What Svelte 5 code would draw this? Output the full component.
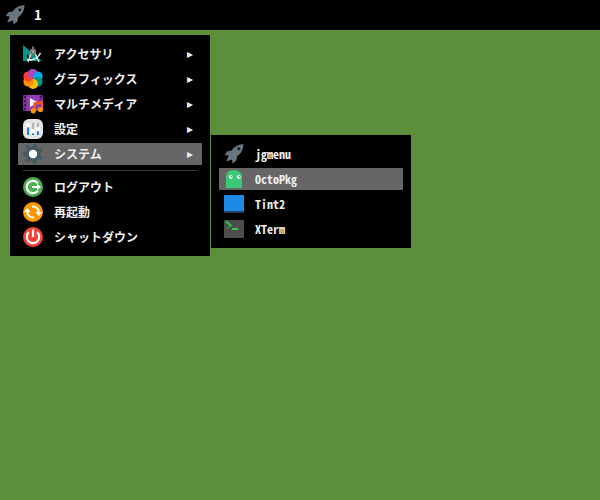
<script lang="ts">
  let active = $state('system');
  let activeApp = $state('octopkg');

  const categories = [
    { key: 'accessories', label: 'アクセサリ' },
    { key: 'graphics', label: 'グラフィックス' },
    { key: 'multimedia', label: 'マルチメディア' },
    { key: 'settings', label: '設定' },
    { key: 'system', label: 'システム' },
  ];

  const session = [
    { key: 'logout', label: 'ログアウト' },
    { key: 'reboot', label: '再起動' },
    { key: 'shutdown', label: 'シャットダウン' },
  ];

  const systemApps = [
    { key: 'jgmenu', label: 'jgmenu' },
    { key: 'octopkg', label: 'OctoPkg' },
    { key: 'tint2', label: 'Tint2' },
    { key: 'xterm', label: 'XTerm' },
  ];
</script>

{#snippet icon(name: string)}
  <svg class="icon" viewBox="0 0 20 20" aria-hidden="true">
    {#if name === 'accessories'}
      <path d="M0 1L19 17H0z" fill="#009688" />
      <path d="M4 10l5 5H4z" fill="#04110f" />
      <path d="M8.6 8L5 18M11.4 8l4.6 10" stroke="#cfd2d4" stroke-width="1.6" fill="none" />
      <path d="M4 15.5Q13 17.5 17.5 9" stroke="#f1f1f1" stroke-width="1.6" fill="none" />
      <path d="M9 2.5h2V6H9z" fill="#757575" />
      <circle cx="10" cy="7.6" r="3.2" fill="#757575" />
      <circle cx="10" cy="7.8" r="1" fill="#bdbdbd" />
    {:else if name === 'graphics'}
      <circle cx="10" cy="5" r="5" fill="#ab47bc" />
      <circle cx="14.6" cy="7.4" r="5" fill="#03a9f4" />
      <circle cx="14.6" cy="12.6" r="5" fill="#009688" />
      <circle cx="10" cy="15" r="5" fill="#ffc107" />
      <circle cx="5.4" cy="12.6" r="5" fill="#ff8f00" />
      <circle cx="5.4" cy="7.4" r="5" fill="#ff3d2e" />
      <path d="M10 10A5 5 0 0 1 5.8 2.3 5 5 0 0 1 10 0L13 4Q9 6 10 10z" fill="#ab47bc" />
    {:else if name === 'multimedia'}
      <rect y="1" width="20" height="16" rx="1" fill="#7b3196" />
      <path d="M4 1h12v16H4z" fill="#8e3eaf" />
      <path
        d="M1 2h2v2H1zM1 6h2v2H1zM1 10h2v2H1zM1 14h2v2H1zM17 2h2v2h-2z"
        fill="#40185a"
      />
      <path d="M7 4l8 4.5L7 13z" fill="#fff" />
      <path d="M11.5 17V9.2l7.5-1v8" stroke="#ff5722" stroke-width="2" fill="none" />
      <path d="M11 10.2l9-1.5" stroke="#f4511e" stroke-width="2" />
      <circle cx="10.3" cy="16.8" r="2.6" fill="#ff9800" />
      <circle cx="17.5" cy="15.6" r="2.6" fill="#ff9800" />
    {:else if name === 'settings'}
      <rect width="20" height="20" rx="6" fill="#e3e4e5" />
      <path d="M5 4v12M10 4v12M15 4v12" stroke="#b0b3b6" stroke-width="2" />
      <path d="M5 7v9M10 12v4M15 11v5" stroke="#1e7fe0" stroke-width="2" />
      <circle cx="5" cy="6.2" r="2.2" fill="#fff" />
      <circle cx="10" cy="12.2" r="2.2" fill="#fff" />
      <circle cx="15" cy="10.2" r="2.2" fill="#fff" />
    {:else if name === 'system'}
      <circle cx="10" cy="10" r="7.6" fill="#455a64" />
      <circle
        cx="10"
        cy="10"
        r="8"
        fill="none"
        stroke="#455a64"
        stroke-width="4"
        pathLength="70"
        stroke-dasharray="5 5"
        transform="rotate(-38 10 10)"
      />
      <circle cx="10" cy="10" r="4.2" fill="#fff" />
    {:else if name === 'logout'}
      <circle cx="10" cy="10" r="10" fill="#4caf50" />
      <path d="M15 6.4A6.2 6.2 0 1 0 15 13.6" stroke="#fff" stroke-width="2.2" fill="none" />
      <path d="M9 9h5V6.8l4 3.2-4 3.2V11H9z" fill="#fff" />
    {:else if name === 'reboot'}
      <circle cx="10" cy="10" r="10" fill="#ff9800" />
      <path
        d="M9 4.6a5.8 5.8 0 0 1 6.8 6M11 15.4a5.8 5.8 0 0 1-6.8-6"
        stroke="#fff"
        stroke-width="2.2"
        fill="none"
      />
      <path d="M12.4 10h6.8l-3.4 4zM.8 10h6.8L4.2 6z" fill="#fff" />
    {:else if name === 'shutdown'}
      <circle cx="10" cy="10" r="10" fill="#f44336" />
      <path d="M6 5.2a6.2 6.2 0 1 0 8 0" stroke="#fff" stroke-width="2.2" fill="none" />
      <path d="M10 2.5V10" stroke="#fff" stroke-width="2.2" />
    {:else if name === 'jgmenu'}
      <path
        d="M19.5 0C14 .3 10 3 7.7 6.6L3.5 7.3.5 11l4.2.4L2.2 17.5 8 15.6l.6 4 3.8-3.1.7-4.3C17 9.7 19.4 5.5 19.5 0z"
        fill="#687681"
      />
      <circle cx="14.8" cy="4.8" r="1.5" fill="#17191b" />
    {:else if name === 'octopkg'}
      <path
        d="M2 19.5V7a8 6 0 0 1 16 0v12.5l-2-.8-2 .8-2-.8-2 .8-2-.8-2 .8-2-.8z"
        fill="#3cc874"
      />
      <circle cx="6.7" cy="8" r="2" fill="#e7f8ed" />
      <circle cx="14.7" cy="8" r="2" fill="#e7f8ed" />
      <circle cx="7.3" cy="7.6" r=".6" fill="#3d6650" />
      <circle cx="15.3" cy="7.6" r=".6" fill="#3d6650" />
    {:else if name === 'tint2'}
      <rect y="1" width="20" height="18" rx="1" fill="#1565c0" />
      <path d="M0 1h20v16H0z" fill="#1e88e5" />
      <path d="M0 17h20v2H0z" fill="#263f5c" />
    {:else if name === 'xterm'}
      <rect y="1" width="20" height="18" rx="1" fill="#4d4d4d" />
      <path d="M7 6L3 9.5" stroke="#1f8a3c" stroke-width="2" />
      <path d="M2 2.5L7.4 7M8 10h6" stroke="#2ecc40" stroke-width="2" fill="none" />
    {/if}
  </svg>
{/snippet}

<div class="desktop">
  <header class="panel">
    <button class="launcher" aria-label="jgmenu">{@render icon('jgmenu')}</button>
    <span class="workspace">1</span>
  </header>

  <nav class="menu">
    {#each categories as item}
      <div class="entry">
        <button class="item" class:active={active === item.key} onclick={() => (active = item.key)}>
          {@render icon(item.key)}
          <span class="label">{item.label}</span>
          <span class="arrow">▸</span>
        </button>

        {#if item.key === 'system' && active === 'system'}
          <div class="menu submenu">
            {#each systemApps as app}
              <button
                class="item"
                class:active={activeApp === app.key}
                onclick={() => (activeApp = app.key)}
              >
                {@render icon(app.key)}
                <span class="label">{app.label}</span>
              </button>
            {/each}
          </div>
        {/if}
      </div>
    {/each}

    <hr class="separator" />

    {#each session as item}
      <button class="item">
        {@render icon(item.key)}
        <span class="label">{item.label}</span>
      </button>
    {/each}
  </nav>
</div>

<style>
  :global(body) {
    background: #5b8f3c;
  }

  .desktop {
    min-height: 100vh;
    font-family: 'Noto Sans CJK JP', sans-serif;
    font-size: 12px;
    font-weight: 700;
    line-height: 20px;
    color: #eee;
  }

  .panel {
    display: flex;
    align-items: center;
    gap: 9px;
    height: 30px;
    padding: 0 5px;
    background: #000;
  }

  .launcher {
    display: flex;
    padding: 0;
    border: none;
    background: none;
  }

  .workspace {
    font-size: 13px;
    color: #fff;
  }

  .menu {
    display: flex;
    flex-direction: column;
    gap: 3px;
    box-sizing: border-box;
    width: 200px;
    margin: 5px 10px;
    padding: 8px;
    background: #000;
  }

  .entry {
    position: relative;
  }

  .submenu {
    position: absolute;
    top: -8px;
    left: 193px;
    margin: 0;
    /* half-width latin, to sit on the same grid as the kana */
    font-feature-settings: 'hwid';
  }

  .item {
    display: flex;
    align-items: center;
    gap: 11px;
    width: 100%;
    height: 22px;
    padding: 0 9px 0 5px;
    border: none;
    border-radius: 1px;
    background: none;
    color: inherit;
    font: inherit;
    font-feature-settings: inherit;
    text-align: left;
  }

  .item.active {
    background: #666;
  }

  .label {
    flex: 1;
    white-space: nowrap;
  }

  .arrow {
    font-family: 'DejaVu Sans', sans-serif;
    font-weight: 400;
  }

  .icon {
    display: block;
    flex: none;
    width: 20px;
    height: 20px;
  }

  .separator {
    width: 174px;
    height: 1px;
    margin: 2px auto;
    border: none;
    background: #3a3a3a;
  }
</style>
